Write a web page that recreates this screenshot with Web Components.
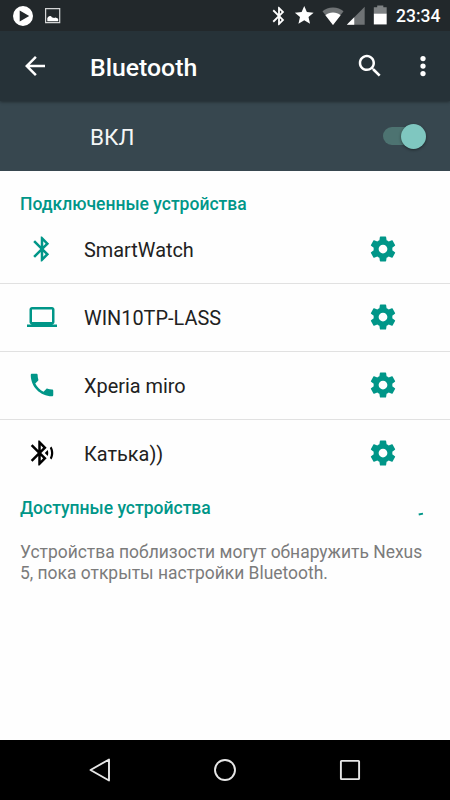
<!DOCTYPE html>
<html lang="ru">
<head>
<meta charset="utf-8">
<title>Bluetooth</title>
<style>
html,body{margin:0;height:100%}
body{font-family:Roboto,"Noto Sans",sans-serif;background:#fefefe;color:#212121;overflow:hidden}
</style>
</head>
<body>
<bt-screen></bt-screen>
<script>
const BT='<path d="M17.71 7.71L12 2h-1v7.59L6.41 5 5 6.41 10.59 12 5 17.59 6.41 19 11 14.41V22h1l5.71-5.71-4.3-4.29 4.3-4.29zM13 5.83l1.88 1.88L13 9.59V5.83zm1.88 10.46L13 18.17v-3.76l1.88 1.88z"/>';
const ICONS={
play:'<path fill-rule="evenodd" d="M12 2a10 10 0 1 0 0 20 10 10 0 0 0 0-20zM8.7 6.6L18.2 12 8.7 17.4z"/>',
image:'<path fill="none" stroke="#d4d5d6" stroke-width="1.2" d="M4.6 4.6h14.1v14.1H4.6z"/><path d="M6.3 17.3v-3.3q1.6-2.6 3.2-2 1 .4 1.5 1.6 1.2-.6 2 .5 1.6-1.3 2.7-.2 1.5.1 1.5 1.4v2z"/>',
bluetooth:BT,
star:'<path d="M12 17.27L18.18 21l-1.64-7.03L22 9.24l-7.19-.61L12 2 9.19 8.63 2 9.24l5.46 4.73L5.82 21z"/>',
wifi:'<path opacity=".35" d="M1.5 7.2C4 4.7 7.8 3.4 12 3.4s8 1.3 10.500 3.800L12 21z"/><path d="M4.4 11.2C6.5 9.3 9 8.4 12 8.4s5.5.9 7.6 2.8L12 21z"/>',
signal:'<path opacity=".35" d="M2 22h20V2z"/><path d="M2 22h8.3v-8.3z"/>',
battery:'<path opacity=".42" d="M5.7 10.3V4.2H9V2.5h6v1.7h3.3v6.1z"/><path d="M5.7 10.3h12.6V21H5.7z"/>',
back:'<path d="M20 11H7.83l5.59-5.59L12 4l-8 8 8 8 1.41-1.41L7.83 13H20v-2z"/>',
search:'<path d="M15.5 14h-.79l-.28-.27C15.41 12.59 16 11.11 16 9.5 16 5.91 13.09 3 9.5 3S3 5.91 3 9.5 5.91 16 9.5 16c1.61 0 3.09-.59 4.23-1.57l.27.28v.79l5 4.99L20.49 19l-4.99-5zm-6 0C7.01 14 5 11.99 5 9.5S7.01 5 9.5 5 14 7.01 14 9.5 11.99 14 9.5 14z"/>',
more:'<circle cx="12" cy="6" r="2.1"/><circle cx="12" cy="12" r="2.1"/><circle cx="12" cy="18" r="2.1"/>',
laptop:'<path d="M20 18c1.1 0 1.99-.9 1.99-2L22 6c0-1.1-.9-2-2-2H4c-1.1 0-2 .9-2 2v10c0 1.1.9 2 2 2H0v2h24v-2h-4zM4 6h16v10H4V6z"/>',
phone:'<path d="M6.62 10.79c1.44 2.83 3.76 5.14 6.59 6.59l2.2-2.2c.27-.27.67-.36 1.02-.24 1.12.37 2.33.57 3.57.57.55 0 1 .45 1 1V20c0 .55-.45 1-1 1-9.39 0-17-7.61-17-17 0-.55.45-1 1-1h3.5c.55 0 1 .45 1 1 0 1.25.2 2.45.57 3.57.11.35.03.74-.25 1.02l-2.2 2.2z"/>',
searching:'<path d="M14.24 12.01l2.32 2.32c.28-.72.44-1.51.44-2.33 0-.82-.16-1.59-.43-2.31l-2.33 2.32zm5.29-5.3l-1.26 1.26c.63 1.21.98 2.57.98 4.02s-.36 2.82-.98 4.02l1.2 1.2c.97-1.54 1.54-3.36 1.54-5.31-.01-1.89-.55-3.67-1.48-5.19zm-3.82 1L10 2H9v7.59L4.41 5 3 6.41 8.59 12 3 17.59 4.41 19 9 14.41V22h1l5.71-5.71-4.3-4.29 4.3-4.29zM11 5.83l1.88 1.88L11 9.59V5.83zm1.88 10.46L11 18.17v-3.76l1.88 1.88z"/>',
gear:'<path d="M19.43 12.98c.04-.32.07-.64.07-.98s-.03-.66-.07-.98l2.11-1.65c.19-.15.24-.42.12-.64l-2-3.46c-.12-.22-.39-.3-.61-.22l-2.49 1c-.52-.4-1.08-.73-1.69-.98l-.38-2.65C14.46 2.18 14.25 2 14 2h-4c-.25 0-.46.18-.49.42l-.38 2.65c-.61.25-1.17.59-1.69.98l-2.49-1c-.23-.09-.49 0-.61.22l-2 3.46c-.13.22-.07.49.12.64l2.11 1.65c-.04.32-.07.65-.07.98s.03.66.07.98l-2.11 1.65c-.19.15-.24.42-.12.64l2 3.46c.12.22.39.3.61.22l2.49-1c.52.4 1.08.73 1.69.98l.38 2.65c.03.24.24.42.49.42h4c.25 0 .46-.18.49-.42l.38-2.65c.61-.25 1.17-.59 1.69-.98l2.49 1c.23.09.49 0 .61-.22l2-3.46c.12-.22.07-.49-.12-.64l-2.11-1.65zM12 15.5c-1.93 0-3.5-1.57-3.5-3.5s1.57-3.5 3.5-3.5 3.5 1.57 3.5 3.5-1.57 3.5-3.5 3.5z"/>',
navback:'<path fill="none" stroke="currentColor" stroke-width="1.9" stroke-linejoin="round" d="M21 1.500v21L2.500 12z"/>',
navhome:'<circle cx="12" cy="12" r="10" fill="none" stroke="currentColor" stroke-width="1.9"/>',
navrecent:'<rect x="2.9" y="2.9" width="18.2" height="18.2" rx=".6" fill="none" stroke="currentColor" stroke-width="1.9"/>'
};
class Base extends HTMLElement{
  constructor(){super();this.attachShadow({mode:'open'})}
  connectedCallback(){this.shadowRoot.innerHTML=this.render()}
}
customElements.define('md-icon',class extends Base{
  render(){const s=this.getAttribute('size')||30;
    return `<style>:host{display:block;flex:none;width:${s}px;height:${s}px}svg{display:block;width:100%;height:100%}</style><svg viewBox="0 0 24 24" fill="currentColor">${ICONS[this.getAttribute('name')]}</svg>`}
});
customElements.define('status-bar',class extends Base{
  render(){return `<style>
  :host{display:flex;align-items:center;height:31px;background:#22282b;color:#fff;box-sizing:border-box;padding:0 10px 0 10.5px;position:relative;z-index:1}
  .left{display:flex;align-items:center;gap:6.7px;flex:1}
  .right{display:flex;align-items:center}
  .time{font-size:17.5px;font-weight:500;line-height:31px;margin-left:4px;padding-top:1px;box-sizing:border-box;height:31px;width:44px;white-space:nowrap}
  </style><div class="left"><md-icon name="play" size="24"></md-icon><md-icon name="image" size="24"></md-icon></div>
  <div class="right"><md-icon name="bluetooth" size="22"></md-icon><md-icon name="star" size="22.5" style="margin-left:3px"></md-icon><md-icon name="wifi" size="24" style="margin-left:4.7px"></md-icon><md-icon name="signal" size="21.5"></md-icon><md-icon name="battery" size="24.5" style="margin-left:1.5px"></md-icon><span class="time"><slot></slot></span></div>`}
});
customElements.define('app-toolbar',class extends Base{
  render(){return `<style>
  :host{display:flex;align-items:center;height:70px;background:#263238;color:#fff;box-sizing:border-box;padding:0 12.5px 0 20px;box-shadow:0 1px 3px rgba(0,0,0,.4);position:relative}
  h1{margin:0 0 0 40px;flex:1;font-size:24.8px;font-weight:500;line-height:30px;padding-top:4px}
  .more{margin-left:22.5px}
  </style><md-icon name="back"></md-icon><h1><slot></slot></h1><md-icon name="search"></md-icon><md-icon class="more" name="more"></md-icon>`}
});
customElements.define('toggle-switch',class extends Base{
  render(){return `<style>
  :host{display:flex;align-items:center;justify-content:flex-end;width:42.5px;height:18px;background:linear-gradient(90deg,#4d7371 36px,transparent 36px);border-radius:9px}
  i{width:25px;height:25px;border-radius:50%;background:#7fc7c0;box-shadow:0 1px 3px rgba(0,0,0,.45)}
  </style><i></i>`}
});
customElements.define('switch-bar',class extends Base{
  render(){return `<style>
  :host{display:flex;align-items:center;justify-content:space-between;height:70px;background:#37474f;color:#f4f6f6;font-size:22.5px;box-sizing:border-box;padding:0 24.5px 0 90px}
  span{padding-top:2px}
  </style><span><slot></slot></span><toggle-switch></toggle-switch>`}
});
customElements.define('section-title',class extends Base{
  render(){return `<style>
  :host{display:flex;align-items:center;justify-content:space-between;padding:0 26px 0 20px;color:#009688;font-size:17.53px;font-weight:500;line-height:22px}
  svg{display:block;margin-top:12px}
  </style><span><slot></slot></span>${this.hasAttribute('busy')?'<svg width="6" height="4" viewBox="0 0 6 4"><path d="M.7 2.500L5 1.600" stroke="#009688" stroke-width="1.9"/></svg>':''}`}
});
customElements.define('device-row',class extends Base{
  render(){return `<style>
  :host{display:flex;align-items:center;height:68px;box-sizing:border-box;border-bottom:1px solid #e1e1e1;padding:0 52.5px 1px 27px;font-size:19.9px}
  :host(:last-of-type){border-bottom-color:transparent}
  .kind{color:${this.getAttribute('tint')||'#009688'}}
  span{flex:1;margin-left:27px;padding-top:3px}
  .gear{color:#009688}
  </style><md-icon class="kind" name="${this.getAttribute('icon')}"></md-icon><span><slot></slot></span><md-icon class="gear" name="gear"></md-icon>`}
});
customElements.define('nav-bar',class extends Base{
  render(){return `<style>
  :host{display:flex;align-items:center;justify-content:center;gap:101px;height:60px;background:#000;color:#e6e6e6}
  </style><md-icon name="navback" size="24"></md-icon><md-icon name="navhome" size="24"></md-icon><md-icon name="navrecent" size="24"></md-icon>`}
});
customElements.define('bt-screen',class extends Base{
  render(){return `<style>
  :host{display:flex;flex-direction:column;width:450px;height:800px}
  main{flex:1;min-height:0;background:#fefefe;padding-top:22px}
  p{margin:23px 20px 0;font-size:17.46px;line-height:20.5px;color:#7b7b7b;white-space:nowrap}
  .list{margin-top:1px}
  .avail{margin-top:9px}
  </style>
  <status-bar>23:34</status-bar><app-toolbar>Bluetooth</app-toolbar><switch-bar>ВКЛ</switch-bar>
  <main><section-title>Подключенные устройства</section-title>
  <div class="list"><device-row icon="bluetooth">SmartWatch</device-row><device-row icon="laptop">WIN10TP-LASS</device-row><device-row icon="phone">Xperia miro</device-row><device-row icon="searching" tint="#000">Катька))</device-row></div>
  <section-title class="avail" busy>Доступные устройства</section-title>
  <p>Устройства поблизости могут обнаружить Nexus<br>5, пока открыты настройки Bluetooth.</p></main>
  <nav-bar></nav-bar>`}
});
</script>
</body>
</html>
